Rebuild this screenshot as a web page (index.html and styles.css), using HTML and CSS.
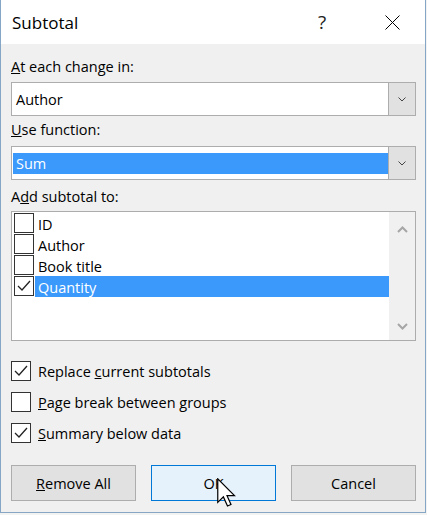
FILE: index.html
```html
<!DOCTYPE html>
<html lang="en">
<head>
    <meta charset="UTF-8">
    <meta name="viewport" content="width=device-width, initial-scale=1.0">
    <title>Subtotal</title>
    <link rel="stylesheet" href="styles.css">
</head>
<body>
    <div class="dialog">
        <div class="titlebar">
            <span class="title">Subtotal</span>
            <span class="help">?</span>
            <svg class="close" width="15" height="15" viewBox="0 0 15 15">
                <path d="M0.5 0.5 L14.5 14.5 M14.5 0.5 L0.5 14.5" stroke="#000" stroke-width="1" fill="none"/>
            </svg>
        </div>

        <div class="content">
            <div class="field-label label-first"><u>A</u>t each change in:</div>
            <div class="combo">
                <div class="combo-value">Author</div>
                <div class="combo-btn">
                    <svg width="8" height="5" viewBox="0 0 8 5"><path d="M0.5 0.5 L4 4 L7.5 0.5" stroke="#444" fill="none"/></svg>
                </div>
            </div>

            <div class="field-label label-fn"><u>U</u>se function:</div>
            <div class="combo">
                <div class="combo-value"><span class="combo-selected">Sum</span></div>
                <div class="combo-btn">
                    <svg width="8" height="5" viewBox="0 0 8 5"><path d="M0.5 0.5 L4 4 L7.5 0.5" stroke="#444" fill="none"/></svg>
                </div>
            </div>

            <div class="field-label label-add">A<u>d</u>d subtotal to:</div>
            <div class="listbox">
                <ul class="items">
                    <li class="item"><span class="check"></span><span class="item-text">ID</span></li>
                    <li class="item"><span class="check"></span><span class="item-text">Author</span></li>
                    <li class="item"><span class="check"></span><span class="item-text">Book title</span></li>
                    <li class="item">
                        <span class="check">
                            <svg width="18" height="18" viewBox="0 0 18 18"><path d="M3 9 L7 13 L15 4" stroke="#222" stroke-width="1.3" fill="none"/></svg>
                        </span>
                        <span class="item-text selected">Quantity</span>
                    </li>
                </ul>
                <div class="scrollbar">
                    <div class="arrow arrow-up">
                        <svg width="11" height="7" viewBox="0 0 11 7"><path d="M1 6 L5.5 1.5 L10 6" stroke="#a6a6a6" stroke-width="2" fill="none"/></svg>
                    </div>
                    <div class="arrow arrow-down">
                        <svg width="11" height="7" viewBox="0 0 11 7"><path d="M1 1 L5.5 5.5 L10 1" stroke="#a6a6a6" stroke-width="2" fill="none"/></svg>
                    </div>
                </div>
            </div>

            <div class="options">
                <div class="option">
                    <span class="check">
                        <svg width="18" height="18" viewBox="0 0 18 18"><path d="M3 9 L7 13 L15 4" stroke="#222" stroke-width="1.3" fill="none"/></svg>
                    </span>
                    <span class="option-text">Replace <u>c</u>urrent subtotals</span>
                </div>
                <div class="option">
                    <span class="check"></span>
                    <span class="option-text"><u>P</u>age break between groups</span>
                </div>
                <div class="option">
                    <span class="check">
                        <svg width="18" height="18" viewBox="0 0 18 18"><path d="M3 9 L7 13 L15 4" stroke="#222" stroke-width="1.3" fill="none"/></svg>
                    </span>
                    <span class="option-text"><u>S</u>ummary below data</span>
                </div>
            </div>

            <div class="buttons">
                <button class="btn"><u>R</u>emove All</button>
                <button class="btn btn-default">OK
                    <!-- mouse pointer hovering the default button -->
                    <svg class="pointer" width="19" height="29" viewBox="0 0 12.5 19">
                        <path d="M0.5 0.5 L0.5 16 L4.2 12.4 L6.9 18.4 L9.2 17.4 L6.6 11.6 L11.5 11.6 Z" fill="#fff" stroke="#000" stroke-width="0.8" stroke-linejoin="miter"/>
                    </svg>
                </button>
                <button class="btn">Cancel</button>
            </div>
        </div>
    </div>
</body>
</html>
```

FILE: styles.css
```css
html {
    background-color: #f3f3f3;
}

body {
    margin: 0;
    padding: 0;
    font-family: "Open Sans", "Noto Sans", sans-serif;
    font-size: 14.5px;
    color: #000;
}

.dialog {
    width: 426px;
    height: 513px;
    box-sizing: border-box;
    background-color: #f0f0f0;
    border-left: 1px solid #86a6c6;
    border-right: 1px solid #86a6c6;
    border-bottom: 1px solid #86a6c6;
}

/* title bar */
.titlebar {
    height: 44px;
    background-color: #fff;
    display: flex;
    align-items: center;
    padding-left: 11px;
}

.title {
    flex: 1;
    font-size: 17px;
}

.help {
    width: 20px;
    text-align: center;
    font-size: 19px;
    color: #222;
    margin-right: 53px;
}

.close {
    display: block;
    margin-right: 25px;
}

/* dialog body */
.content {
    padding: 0 9px 0 10px;
}

.field-label {
    line-height: 20px;
}

.label-first {
    margin-top: 13px;
    margin-bottom: 5px;
}

.label-fn {
    margin-top: 4px;
    margin-bottom: 6px;
}

.label-add {
    margin-top: 7px;
    margin-bottom: 4px;
}

.combo {
    height: 34px;
    box-sizing: border-box;
    border: 1px solid #adadad;
    background-color: #fff;
    display: flex;
}

.combo-value {
    flex: 1;
    display: flex;
    align-items: center;
    padding-left: 4px;
}

.combo-selected {
    flex: 1;
    height: 21px;
    line-height: 21px;
    margin-left: -3px;
    padding-left: 3px;
    background-color: #3b99fc;
    color: #fff;
}

.combo-btn {
    width: 26px;
    background-color: #e1e1e1;
    border-left: 1px solid #adadad;
    display: flex;
    align-items: center;
    justify-content: center;
}

.combo-btn svg {
    display: block;
}

/* list with checkboxes */
.listbox {
    height: 130px;
    box-sizing: border-box;
    border: 1px solid #acacac;
    background-color: #fff;
    display: flex;
}

.items {
    flex: 1;
    list-style: none;
    margin: 0;
    padding: 1px 0 0 2px;
}

.item {
    height: 21px;
    display: flex;
}

.check {
    width: 20px;
    height: 20px;
    box-sizing: border-box;
    border: 1px solid #333;
    background-color: #fff;
    display: flex;
    align-items: center;
    justify-content: center;
    flex-shrink: 0;
}

.check svg {
    display: block;
}

.item-text {
    flex: 1;
    margin-left: 1px;
    padding: 1px 0 0 3px;
    height: 21px;
    box-sizing: border-box;
    line-height: 21px;
}

.item-text.selected {
    background-color: #3b99fc;
    color: #fff;
}

.scrollbar {
    width: 26px;
    background-color: #f0f0f0;
    display: flex;
    flex-direction: column;
    justify-content: space-between;
}

.arrow {
    display: flex;
    align-items: center;
    justify-content: center;
}

.arrow-up {
    height: 34px;
}

.arrow-down {
    height: 28px;
}

.arrow svg {
    display: block;
}

/* options below the list */
.options {
    margin-top: 20px;
    display: flex;
    flex-direction: column;
    gap: 11px;
}

.option {
    display: flex;
    align-items: center;
    height: 20px;
}

.option .check {
    margin-right: 7px;
}

.option-text {
    line-height: 20px;
    padding-top: 2px;
}

/* buttons */
.buttons {
    margin-top: 22px;
    display: flex;
    gap: 15px;
}

.btn {
    width: 125px;
    height: 36px;
    box-sizing: border-box;
    border: 1px solid #adadad;
    background-color: #e1e1e1;
    font-family: inherit;
    font-size: 14.5px;
    color: #000;
    padding: 0;
}

.btn-default {
    position: relative;
    border-color: #0078d7;
    background-color: #e5f1fb;
}

.pointer {
    position: absolute;
    left: 65px;
    top: 12px;
}
```
